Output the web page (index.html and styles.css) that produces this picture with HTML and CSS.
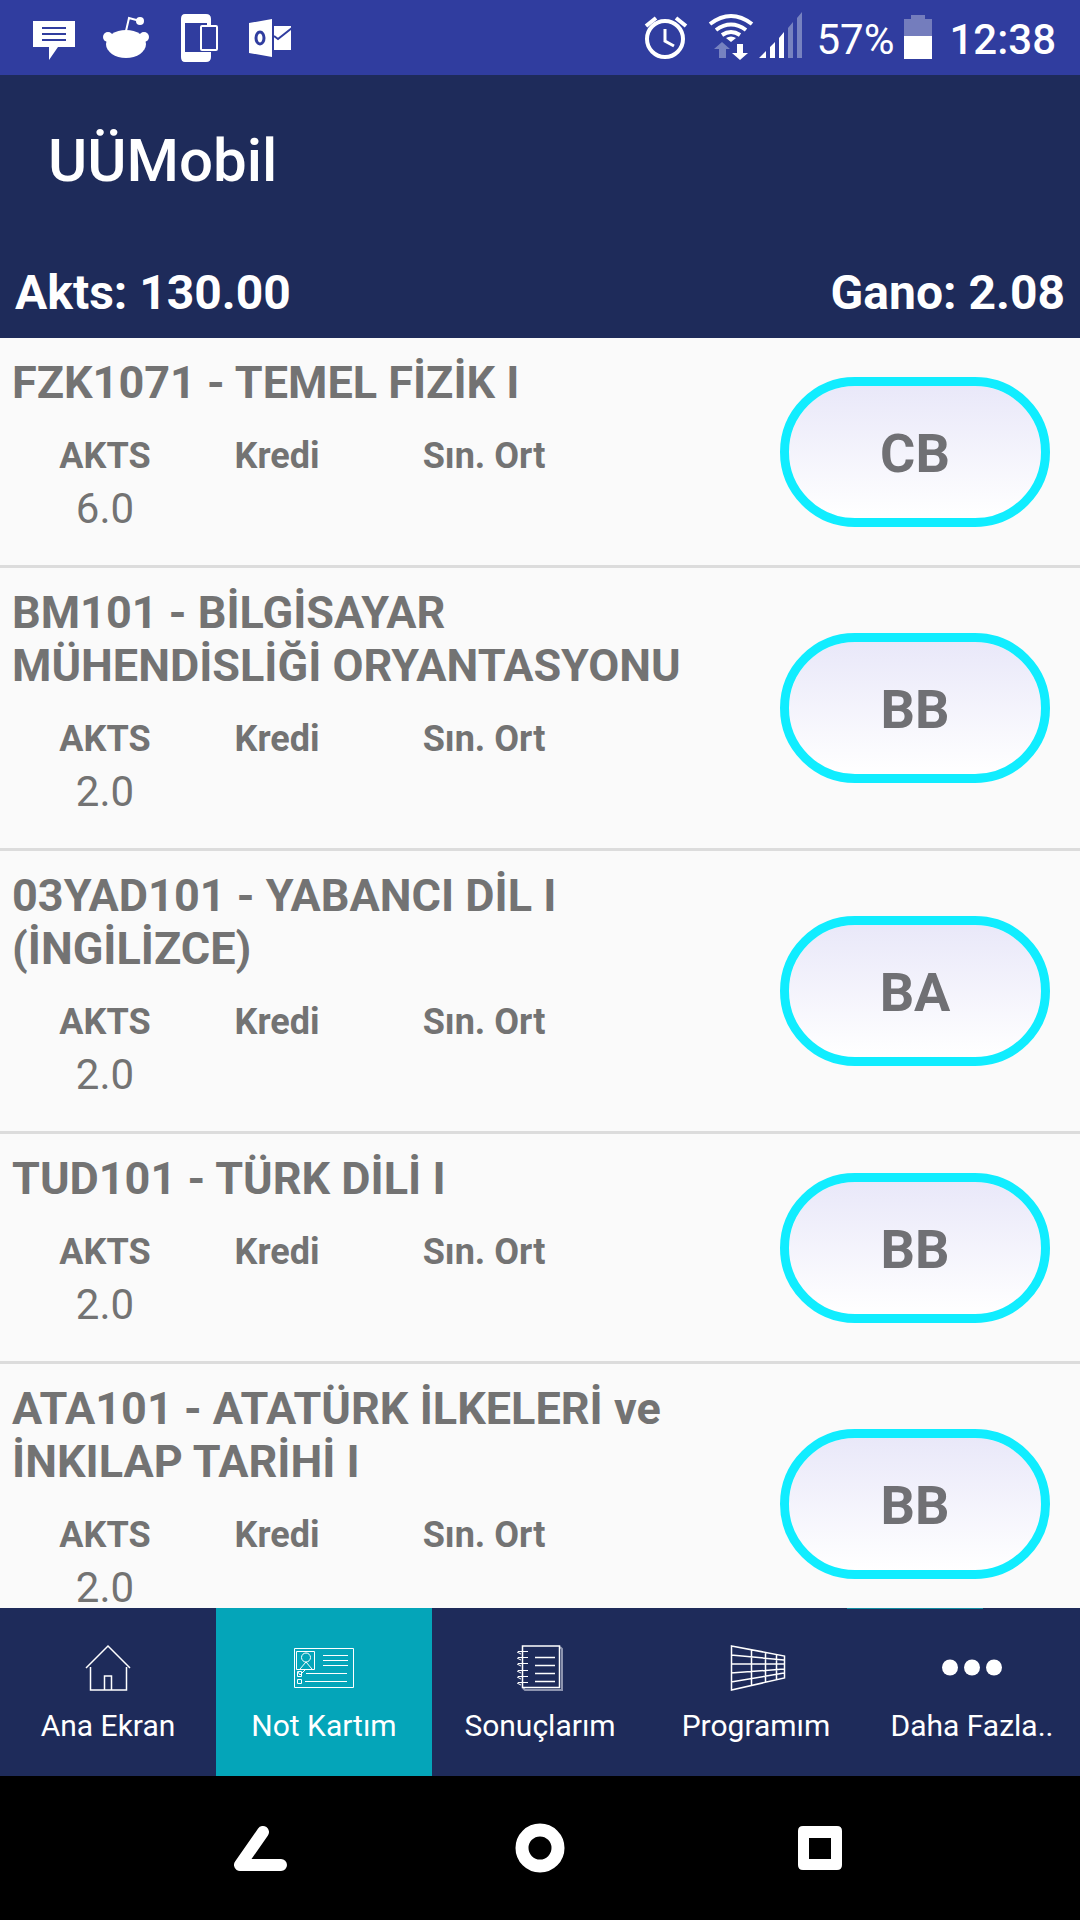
FILE: index.html
```html
<!DOCTYPE html>
<html lang="tr">
<head>
<meta charset="utf-8">
<meta name="viewport" content="width=device-width, initial-scale=1">
<title>UÜMobil</title>
<link rel="stylesheet" href="styles.css">
</head>
<body>
<div class="app">
  <div class="status">
    <div class="status-left">
      <svg width="42" height="75" viewBox="33 0 42 75" aria-hidden="true"><path fill="#fff" d="M33 21h42v26H58L49 60V47H33z"/><path stroke="#303d9f" stroke-width="2" d="M42 28h24M42 34h24M42 40h24"/></svg>
      <svg width="46" height="75" viewBox="103 0 46 75" aria-hidden="true"><g fill="#fff"><ellipse cx="126" cy="44" rx="20" ry="14"/><circle cx="108" cy="37" r="5"/><circle cx="144" cy="37" r="5"/><circle cx="140" cy="21" r="4"/></g><path fill="none" stroke="#fff" stroke-width="2" d="M126 31l3-13 11 3"/></svg>
      <svg width="43" height="75" viewBox="177 0 43 75" aria-hidden="true"><path fill="#fff" fill-rule="evenodd" d="M185 14h21q5 0 5 5v38q0 5-5 5h-21q-4 0-4-5V19q0-5 4-5zM185 23v29h22V23z"/><rect x="200" y="25" width="18" height="27" rx="2" fill="#303d9f"/><rect x="201" y="26" width="16" height="24" rx="1" fill="#303d9f" stroke="#fff" stroke-width="2"/></svg>
      <svg width="43" height="75" viewBox="248 0 43 75" aria-hidden="true"><path fill="#fff" d="M249 23l23-4v38l-23-4zM274 26h17v24h-17z"/><ellipse cx="260" cy="38" rx="4" ry="6" fill="none" stroke="#303d9f" stroke-width="3"/><path fill="none" stroke="#303d9f" stroke-width="2" d="M274 36l4 3 14-11"/></svg>
    </div>
    <div class="status-right">
      <svg width="44" height="75" viewBox="646 0 44 75" aria-hidden="true"><g fill="none" stroke="#fff"><circle cx="667" cy="39" r="18" stroke-width="4"/><path stroke-width="3" d="M667 29v12l9 5"/><path stroke-width="4" d="M648 26l10-8M688 26l-10-8"/></g></svg>
      <svg width="94" height="75" viewBox="710 0 94 75" aria-hidden="true"><g fill="none" stroke="#fff" stroke-width="4"><path d="M712 24q21-16 42 0"/><path d="M718 30q15-11 30 0"/><path d="M724 35q9-6 18 0"/></g><path fill="#fff" d="M728 38q5-3 10 0l-5 4zM739 44h6v9h5l-8 7-8-7h5zM761 58l7-7v7zM772 47l5-5v16h-5zM781 38l5-6v26h-5z"/><path fill="#7782c0" d="M721 58h7v-9h4l-8-7-8 7h5zM790 28l5-6v36h-5zM799 18l5-6v46h-5z"/></svg>
      <span class="percent">57%</span>
      <svg width="28" height="75" viewBox="905 0 28 75" aria-hidden="true"><path fill="#747dbd" d="M912 15h14v4h7v17h-28V19h7z"/><path fill="#fff" d="M905 36h28v23h-28z"/></svg>
      <time class="clock">12:38</time>
    </div>
  </div>

  <header class="header">
    <h1 class="title">UÜMobil</h1>
    <div class="summary"><span>Akts: 130.00</span><span>Gano: 2.08</span></div>
  </header>

  <main class="list">
    <section class="course">
      <div class="info">
        <h2 class="name">FZK1071 - TEMEL FİZİK I</h2>
        <table class="figures">
          <tr><th class="c-akts">AKTS</th><th class="c-kredi">Kredi</th><th class="c-ort">Sın. Ort</th></tr>
          <tr><td>6.0</td><td></td><td></td></tr>
        </table>
      </div>
      <button class="grade" type="button">CB</button>
    </section>
    <section class="course">
      <div class="info">
        <h2 class="name">BM101 - BİLGİSAYAR MÜHENDİSLİĞİ ORYANTASYONU</h2>
        <table class="figures">
          <tr><th class="c-akts">AKTS</th><th class="c-kredi">Kredi</th><th class="c-ort">Sın. Ort</th></tr>
          <tr><td>2.0</td><td></td><td></td></tr>
        </table>
      </div>
      <button class="grade" type="button">BB</button>
    </section>
    <section class="course">
      <div class="info">
        <h2 class="name">03YAD101 - YABANCI DİL I (İNGİLİZCE)</h2>
        <table class="figures">
          <tr><th class="c-akts">AKTS</th><th class="c-kredi">Kredi</th><th class="c-ort">Sın. Ort</th></tr>
          <tr><td>2.0</td><td></td><td></td></tr>
        </table>
      </div>
      <button class="grade" type="button">BA</button>
    </section>
    <section class="course">
      <div class="info">
        <h2 class="name">TUD101 - TÜRK DİLİ I</h2>
        <table class="figures">
          <tr><th class="c-akts">AKTS</th><th class="c-kredi">Kredi</th><th class="c-ort">Sın. Ort</th></tr>
          <tr><td>2.0</td><td></td><td></td></tr>
        </table>
      </div>
      <button class="grade" type="button">BB</button>
    </section>
    <section class="course">
      <div class="info">
        <h2 class="name">ATA101 - ATATÜRK İLKELERİ ve İNKILAP TARİHİ I</h2>
        <table class="figures">
          <tr><th class="c-akts">AKTS</th><th class="c-kredi">Kredi</th><th class="c-ort">Sın. Ort</th></tr>
          <tr><td>2.0</td><td></td><td></td></tr>
        </table>
      </div>
      <button class="grade" type="button">BB</button>
    </section>
  </main>

  <nav class="tabs">
    <a class="tab" href="#ana">
      <svg class="tab-icon" viewBox="78 1644 60 48" aria-hidden="true"><path stroke-width="1.500" d="M86 1668l22-22 22 22M90.500 1667v23h36v-23M104.500 1690v-14h7v14"/></svg>
      <span>Ana Ekran</span>
    </a>
    <a class="tab tab-active" href="#kart" aria-current="page">
      <svg class="tab-icon" viewBox="294 1644 60 48" aria-hidden="true"><g stroke-width="1"><path d="M294.500 1648.500h59v39h-59zM296.500 1651.500h18v18h-18zM323 1655.500h25M323 1660.500h25M323 1665.500h25M306 1673.500h41M305 1681.500h42M297.500 1671.500h4v5h-4zM297.500 1679.500h4v4h-4zM298 1672l2 3 5-5M300 1669l6-7 6 7"/><circle cx="306" cy="1657.500" r="4.500"/></g></svg>
      <span>Not Kartım</span>
    </a>
    <a class="tab" href="#sonuc">
      <svg class="tab-icon" viewBox="510 1644 60 48" aria-hidden="true"><path stroke="#8c93ae" d="M560 1647l2 2v41h-37l-2-2"/><path stroke-width="1.500" d="M522.500 1646h37v41.500h-37zM535 1657.500h20M535 1665.500h20M535 1673.500h20M535 1681.500h20"/><path stroke-width="1" d="M518 1651.500h10M517 1652l4 2M518 1657.500h10M517 1658l4 2M518 1663.500h10M517 1664l4 2M518 1670.500h10M517 1671l4 2M518 1676.500h10M517 1677l4 2M518 1682.500h10M517 1683l4 2"/></svg>
      <span>Sonuçlarım</span>
    </a>
    <a class="tab" href="#program">
      <svg class="tab-icon" viewBox="726 1644 60 48" aria-hidden="true"><path stroke-width="1.500" d="M731.500 1646l53 10v22l-53 12zM751.500 1650v36M765.500 1653v29M776.500 1655v25M731 1655l53 5M731 1664h53M731 1673l53-4M731 1682l53-9"/></svg>
      <span>Programım</span>
    </a>
    <a class="tab" href="#daha">
      <svg class="tab-icon dots" viewBox="942 1644 60 48" aria-hidden="true"><circle cx="950" cy="1667.500" r="8"/><circle cx="972" cy="1667.500" r="8"/><circle cx="994" cy="1667.500" r="8"/></svg>
      <span>Daha Fazla..</span>
    </a>
  </nav>

  <div class="keys">
    <button class="key" type="button" aria-label="Geri"><svg width="54" height="54" viewBox="233 1821 54 54" aria-hidden="true"><path fill="none" stroke="#fff" stroke-width="12" stroke-linecap="round" stroke-linejoin="round" d="M263 1832l-23 33h41"/></svg></button>
    <button class="key" type="button" aria-label="Ana ekran"><svg width="54" height="54" viewBox="0 0 54 54" aria-hidden="true"><circle cx="27" cy="27" r="18" fill="none" stroke="#fff" stroke-width="13"/></svg></button>
    <button class="key" type="button" aria-label="Son uygulamalar"><svg width="54" height="54" viewBox="0 0 54 54" aria-hidden="true"><path fill="#fff" fill-rule="evenodd" d="M10 5h34q5 0 5 5v34q0 5-5 5H10q-5 0-5-5V10q0-5 5-5zM16 17v21h22V17z"/></svg></button>
  </div>
</div>
</body>
</html>
```

FILE: styles.css
```css
* {
  box-sizing: border-box;
}

body {
  margin: 0;
  font-family: Roboto, "Noto Sans", sans-serif;
  background: #fafafa;
  color: #737373;
}

svg {
  display: block;
  flex: none;
}

.app {
  display: flex;
  flex-direction: column;
  height: 100vh;
}

/* System status bar */
.status {
  flex: none;
  display: flex;
  justify-content: space-between;
  height: 75px;
  padding: 0 24px 0 33px;
  background: #303d9f;
  color: #fff;
  font-size: 42px;
  line-height: 80px;
}

.status-left {
  display: flex;
  gap: 28px;
}

.status-right {
  display: flex;
}

.percent {
  margin: 0 10px 0 14px;
}

.clock {
  margin-left: 17px;
  font-weight: 500;
}

.status-right svg + svg {
  margin-left: 20px;
}

/* Title and totals */
.header {
  flex: none;
  padding: 51px 15px 17px;
  background: #1e2b5a;
  color: #fff;
}

.title {
  margin: 0 33px 69px;
  font-size: 60px;
  font-weight: 500;
  line-height: 70px;
}

.summary {
  display: flex;
  justify-content: space-between;
  font-size: 48px;
  font-weight: 700;
  line-height: 56px;
}

/* Course list */
.list {
  flex: 1;
  min-height: 0;
  overflow-y: auto;
  scrollbar-width: none;
}

.course {
  display: flex;
  align-items: center;
  gap: 60px;
  padding-right: 30px;
  border-bottom: 3px solid #dcdcdc;
}

.info {
  flex: 1;
  padding: 18px 0 32px;
}

.name {
  margin: 0 0 26px 12px;
  font-size: 45px;
  font-weight: 700;
  line-height: 53px;
}

.figures {
  border-collapse: collapse;
  text-align: center;
}

.figures th {
  padding: 0 0 7px;
  font-size: 36px;
  font-weight: 700;
  line-height: 42px;
}

.figures td {
  height: 49px;
  padding: 0;
  font-size: 42px;
  line-height: 49px;
}

.c-akts {
  width: 210px;
}

.c-kredi {
  width: 134px;
}

.c-ort {
  width: 280px;
}

.grade {
  flex: none;
  width: 270px;
  height: 150px;
  padding: 4px 0 0;
  border: 9px solid #10edff;
  border-radius: 75px;
  background: linear-gradient(#e9e8f9, #fff) padding-box;
  color: #707074;
  font-family: inherit;
  font-size: 54px;
  font-weight: 700;
  line-height: 64px;
}

/* Bottom tabs */
.tabs {
  flex: none;
  display: flex;
  background: #1e2b5a;
}

.tab {
  position: relative;
  flex: 1;
  display: flex;
  flex-direction: column;
  align-items: center;
  gap: 16px;
  padding: 36px 0 33px;
  color: #fff;
  font-size: 30px;
  line-height: 35px;
  text-decoration: none;
  white-space: nowrap;
}

.tab-active {
  background: #04a5b9;
}

.tab:last-child::before {
  content: "";
  position: absolute;
  top: 0;
  right: 97px;
  width: 136px;
  height: 1px;
  background: #1189a0;
}

.tab-icon {
  width: 60px;
  height: 48px;
  fill: none;
  stroke: #fff;
  stroke-width: 2;
}

.dots {
  fill: #fff;
  stroke: none;
}

/* System navigation keys */
.keys {
  flex: none;
  display: flex;
  height: 144px;
  padding: 0 120px;
  background: #000;
}

.key {
  flex: 1;
  display: flex;
  align-items: center;
  justify-content: center;
  padding: 0;
  border: 0;
  background: none;
}
```
